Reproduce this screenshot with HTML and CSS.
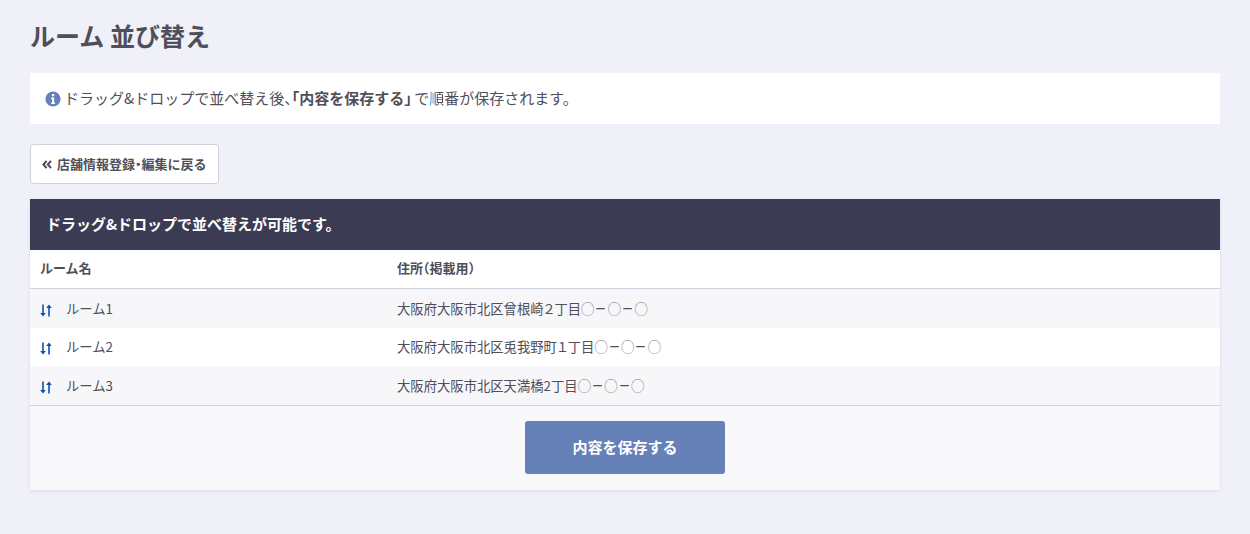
FILE: index.html
```html
<!DOCTYPE html>
<html lang="ja">
<head>
<meta charset="utf-8">
<title>ルーム 並び替え</title>
<link rel="stylesheet" href="styles.css">
</head>
<body>
<main class="page">
  <h1 class="title">ルーム 並び替え</h1>
  <p class="notice">
    <svg class="info-icon" viewBox="0 0 16 16" aria-hidden="true"><circle cx="8" cy="8" r="7.6" fill="#6680b8"/><rect x="6.9" y="3" width="2.3" height="2.3" rx=".6" fill="#fff"/><path d="M6.1 6.6h3v5h1v1.3H6.1v-1.3h1v-3.7h-1z" fill="#fff"/></svg>
    <span>ドラッグ&amp;ドロップで並べ替え後<span class="halt">、</span><strong class="quote"><span class="halt">「</span>内容を保存する<span class="close-quote">」</span></strong>で<span class="mark">順</span>番が保存されます。</span>
  </p>
  <a class="back" href="#">
    <svg class="back-icon" viewBox="0 0 10 9" aria-hidden="true"><path d="M4.6 .8 1.4 4.5 4.6 8.2M9 .8 5.8 4.5 9 8.2" fill="none" stroke="#4c4c5c" stroke-width="2"/></svg>
    <span>店舗情報登録<span class="halt">・</span>編集に戻る</span>
  </a>
  <section class="panel">
    <h2 class="panel-head">ドラッグ&amp;ドロップで並べ替えが可能です。</h2>
    <table class="rooms">
      <thead>
        <tr><th class="col-name">ルーム名</th><th>住所<span class="halt">（</span>掲載用<span class="halt">）</span></th></tr>
      </thead>
      <tbody>
        <tr class="row-a">
          <td class="name-cell"><svg class="sort" viewBox="0 0 12 13" aria-hidden="true"><path d="M2.2 .5h1.6v8.5h2L3 12.500.2 9h2zM8.2 12.5h1.6V4h2L9 .5 6.200 4h2z" fill="#0f4fb0"/></svg>ルーム1</td>
          <td>大阪府大阪市北区曾根崎<span class="num">２</span>丁目<span class="ph">◯</span><span class="dash">ー</span><span class="ph">◯</span><span class="dash">ー</span><span class="ph">◯</span></td>
        </tr>
        <tr class="row-b">
          <td class="name-cell"><svg class="sort" viewBox="0 0 12 13" aria-hidden="true"><path d="M2.2 .5h1.6v8.5h2L3 12.500.2 9h2zM8.2 12.5h1.6V4h2L9 .5 6.200 4h2z" fill="#0f4fb0"/></svg>ルーム2</td>
          <td>大阪府大阪市北区兎我野町<span class="num">１</span>丁目<span class="ph">◯</span><span class="dash">ー</span><span class="ph">◯</span><span class="dash">ー</span><span class="ph">◯</span></td>
        </tr>
        <tr class="row-a">
          <td class="name-cell"><svg class="sort" viewBox="0 0 12 13" aria-hidden="true"><path d="M2.2 .5h1.6v8.5h2L3 12.500.2 9h2zM8.2 12.5h1.6V4h2L9 .5 6.200 4h2z" fill="#0f4fb0"/></svg>ルーム3</td>
          <td>大阪府大阪市北区天満橋2丁目<span class="ph">◯</span><span class="dash">ー</span><span class="ph">◯</span><span class="dash">ー</span><span class="ph">◯</span></td>
        </tr>
      </tbody>
    </table>
    <div class="panel-foot"><button class="save" type="button">内容を保存する</button></div>
  </section>
</main>
</body>
</html>
```
FILE: styles.css
```css
* { box-sizing: border-box; }
html, body { margin: 0; height: 100%; }
body {
  background: #eff0f8;
  color: #4f4f5b;
  font-family: "Noto Sans CJK JP", "Noto Sans", sans-serif;
  font-size: 14px;
  overflow: hidden;
}
.page { padding: 16px 30px 0; }
.title {
  margin: 0;
  height: 57px;
  font-size: 25px;
  line-height: 38px;
  font-weight: 700;
  color: #4f4f5b;
}
.notice {
  display: flex;
  align-items: center;
  gap: 3px;
  height: 51px;
  margin: 0 0 20px;
  padding: 0 15px 2px;
  background: #fff;
  font-size: 15px;
}
.info-icon { width: 16px; height: 16px; flex: none; margin-top: 2px; }
.quote { font-weight: 700; }
.halt { font-feature-settings: "halt"; }
.close-quote { font-feature-settings: "halt"; margin-right: 2.5px; }
.mark {
  color: transparent;
  background: linear-gradient(90deg, #3f8fe0 0 5px, #4f4f5b 5px);
  background-clip: text;
  -webkit-background-clip: text;
}
.back {
  display: inline-flex;
  align-items: center;
  gap: 5px;
  height: 40px;
  padding: 0 11px 2px;
  background: #fff;
  border: 1px solid #cfd3de;
  border-radius: 3px;
  color: #4f4f5b;
  font-size: 13px;
  font-weight: 700;
  text-decoration: none;
  vertical-align: top;
}
.back-icon { width: 10px; height: 9px; margin-top: 2px; }
.panel {
  margin-top: 15px;
  background: #f8f8fb;
  box-shadow: 0 1px 3px rgba(60, 60, 90, .12);
}
.panel-head {
  margin: 0;
  height: 51px;
  padding: 0 16px;
  background: #3c3b54;
  color: #fff;
  font-size: 15px;
  font-weight: 700;
  line-height: 49px;
}
.rooms {
  width: 100%;
  border-collapse: separate;
  border-spacing: 0;
  table-layout: fixed;
  font-size: 13.33px;
}
.rooms th {
  height: 39px;
  padding: 0 10px 4px;
  background: #fff;
  border-bottom: 1px solid #cdd3df;
  font-size: 13px;
  font-weight: 700;
  text-align: left;
}
.rooms td { height: 38.6px; padding: 0 10px; }
.rooms tbody tr:last-child td { height: 39.6px; border-bottom: 1px solid #cdd3df; }
.rooms .col-name { width: 357px; }
.row-a { background: #f7f7fa; }
.row-b { background: #fff; }
.name-cell { white-space: nowrap; }
.sort { width: 12px; height: 13px; margin-right: 14px; vertical-align: -3px; }
.num { margin: 0 -1.25px; }
.ph { color: #808088; }
.dash { display: inline-block; transform: scaleX(.8); }
.panel-foot {
  display: flex;
  justify-content: center;
  height: 84px;
  padding-top: 15px;
}
.save {
  width: 200px;
  height: 53px;
  border: 0;
  border-radius: 3px;
  padding: 0 0 2px;
  background: #6680b8;
  color: #fff;
  font: 700 15px "Noto Sans CJK JP", "Noto Sans", sans-serif;
}
```
